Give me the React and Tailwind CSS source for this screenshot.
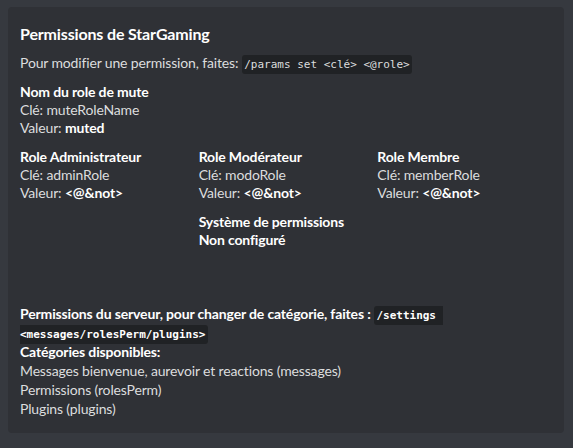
const code = "font-['DejaVu_Sans_Mono',monospace] text-[11px] leading-none tracking-normal bg-[#202225] rounded-[3px] px-[2.5px] py-[3px]";

const Field = ({ name, lines, className = "" }) => (
  <div className={className}>
    <div className="text-white font-bold leading-[18px]">{name}</div>
    {lines.map((l, i) => (
      <div key={i} className="leading-[18px] text-[#dcddde]">
        {l}
      </div>
    ))}
  </div>
);

const val = <b className="text-white">&lt;@&amp;not&gt;</b>;

export default function App() {
  return (
    <div className="w-[573px] h-[448px] bg-[#36393f] pt-[7px] pl-2 font-['Lato',sans-serif] text-[14px] tracking-[-0.15px]">
      <div className="w-[556px] h-[426px] bg-[#2f3136] rounded pl-3 pr-4 pt-4">
        <div className="text-white text-base font-bold leading-[22px]">Permissions de StarGaming</div>

        <div className="mt-[9px] leading-[18px] text-[#dcddde]">
          Pour modifier une permission, faites: <span className={code}>/params set &lt;clé&gt; &lt;@role&gt;</span>
        </div>

        <Field
          className="mt-[11px]"
          name="Nom du role de mute"
          lines={["Clé: muteRoleName", <>Valeur: <b className="text-white">muted</b></>]}
        />

        {/* inline fields */}
        <div className="mt-[11px] grid grid-cols-3 gap-x-2 gap-y-[11px]">
          <Field name="Role Administrateur" lines={["Clé: adminRole", <>Valeur: {val}</>]} />
          <Field name="Role Modérateur" lines={["Clé: modoRole", <>Valeur: {val}</>]} />
          <Field name="Role Membre" lines={["Clé: memberRole", <>Valeur: {val}</>]} />
          <div className="col-start-2">
            <div className="text-white font-bold leading-[18px]">Système de permissions</div>
            <div className="text-white font-bold leading-[18px]">Non configuré</div>
          </div>
        </div>

        <div className="mt-[55px]">
          <div className="text-white font-bold leading-[19px]">
            Permissions du serveur, pour changer de catégorie, faites :{" "}
            <span className={code + " font-bold"}>
              /settings{"\u00a0"}
              <br />
              &lt;messages/rolesPerm/plugins&gt;
            </span>
          </div>
          <div className="leading-[19px] text-[#dcddde]">
            <div className="text-white font-bold">Catégories disponibles:</div>
            <div>Messages bienvenue, aurevoir et reactions (messages)</div>
            <div>Permissions (rolesPerm)</div>
            <div>Plugins (plugins)</div>
          </div>
        </div>
      </div>
    </div>
  );
}
